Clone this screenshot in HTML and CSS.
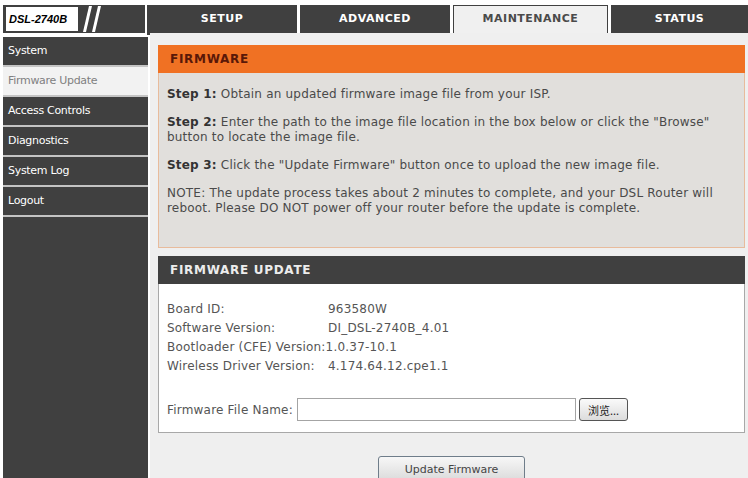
FILE: index.html
```html
<!DOCTYPE html>
<html lang="en">

<head>
    <meta charset="UTF-8">
    <meta name="viewport" content="width=device-width, initial-scale=1.0">
    <title>DSL-2740B</title>
    <link rel="stylesheet" href="styles.css">
</head>

<body>
    <div class="top-bar">
        <div class="brand">
            <span class="model">DSL-2740B</span>
            <svg class="slashes" width="20" height="26" viewBox="0 0 20 26">
                <polygon points="6,0 9,0 3,26 0,26" fill="#fff" />
                <polygon points="15,0 18,0 12,26 9,26" fill="#fff" />
            </svg>
        </div>
        <ul class="tabs">
            <li>SETUP</li>
            <li>ADVANCED</li>
            <li class="active">MAINTENANCE</li>
            <li>STATUS</li>
        </ul>
    </div>

    <div class="main">
        <ul class="side-nav">
            <li>System</li>
            <li class="current">Firmware Update</li>
            <li>Access Controls</li>
            <li>Diagnostics</li>
            <li>System Log</li>
            <li>Logout</li>
        </ul>

        <div class="content">
            <div class="panel">
                <h2 class="panel-head orange">FIRMWARE</h2>
                <div class="panel-body intro">
                    <p><b>Step 1:</b> Obtain an updated firmware image file from your ISP.</p>
                    <p><b>Step 2:</b> Enter the path to the image file location in the box below or click the "Browse" button to locate the image file.</p>
                    <p><b>Step 3:</b> Click the "Update Firmware" button once to upload the new image file.</p>
                    <p>NOTE: The update process takes about 2 minutes to complete, and your DSL Router will reboot. Please DO NOT power off your router before the update is complete.</p>
                </div>
            </div>

            <div class="panel">
                <h2 class="panel-head dark">FIRMWARE UPDATE</h2>
                <div class="panel-body info">
                    <div class="info-grid">
                        <span>Board ID:</span><span>963580W</span>
                        <span>Software Version:</span><span>DI_DSL-2740B_4.01</span>
                        <span class="wide">Bootloader (CFE) Version:1.0.37-10.1</span>
                        <span>Wireless Driver Version:</span><span>4.174.64.12.cpe1.1</span>
                    </div>
                    <div class="file-row">
                        <label for="fw-file">Firmware File Name:</label>
                        <input type="text" id="fw-file" class="file-path">
                        <button class="browse-btn">浏览...</button>
                    </div>
                </div>
            </div>

            <div class="actions">
                <button class="update-btn">Update Firmware</button>
            </div>
        </div>
    </div>
</body>

</html>
```

FILE: styles.css
```css
* {
    margin: 0;
    padding: 0;
    box-sizing: border-box;
}

li {
    list-style: none;
}

body {
    width: 748px;
    height: 478px;
    overflow: hidden;
    background-color: #fff;
    font-family: "DejaVu Sans", Verdana, sans-serif;
    font-size: 11px;
    color: #444;
}

/* header: model badge + main tabs */
.top-bar {
    display: flex;
    height: 33px;
    padding: 5px 0 0 3px;
}

.brand {
    width: 142px;
    display: flex;
    align-items: center;
    gap: 5px;
    padding-left: 3px;
    background-color: #404040;
}

.brand .model {
    width: 72px;
    height: 24px;
    padding-left: 3px;
    background-color: #fff;
    color: #000;
    font: italic bold 11px/24px "Liberation Sans", Arial, sans-serif;
}

.tabs {
    flex: 1;
    margin-left: 2px;
    display: grid;
    grid-template-columns: 150px 150px 155px 1fr;
    column-gap: 3px;
}

.tabs li {
    background-color: #404040;
    color: #fff;
    font-weight: bold;
    line-height: 28px;
    letter-spacing: 0.5px;
    text-align: center;
}

.tabs .active {
    background-color: #f0f0f0;
    color: #4a4a4a;
    border: 1px solid #404040;
    border-bottom: none;
    line-height: 26px;
    height: 30px;
}

/* body: left menu + content */
.main {
    display: flex;
    height: 445px;
}

.side-nav {
    width: 145px;
    margin: 4px 0 0 3px;
    background-color: #404040;
}

.side-nav li {
    height: 30px;
    padding-left: 5px;
    border-bottom: 2px solid #c4c4c4;
    color: #fff;
    line-height: 28px;
    letter-spacing: -0.3px;
}

.side-nav .current {
    background-color: #f2f2f2;
    color: #808080;
}

.content {
    flex: 1;
    margin-left: 2px;
    padding: 12px 3px 0 8px;
    background-color: #efefef;
    font-size: 12px;
    letter-spacing: 0.2px;
}

.panel + .panel {
    margin-top: 8px;
}

.panel-head {
    height: 28px;
    padding-left: 12px;
    font-size: 12px;
    line-height: 28px;
    letter-spacing: 0.7px;
}

.panel-head.orange {
    background-color: #f07123;
    color: #5a1808;
}

.panel-head.dark {
    background-color: #404040;
    color: #ececec;
}

.intro {
    padding: 14px 8px 31px;
    background-color: #e1dfdc;
    border: 1px solid #e8bb9c;
    border-top: none;
    color: #4a4a4a;
}

.intro p {
    line-height: 15px;
    margin-bottom: 13px;
}

.intro p:last-child {
    margin-bottom: 0;
}

.intro b {
    color: #333;
}

.info {
    padding: 15px 8px 11px;
    background-color: #fff;
    border: 1px solid #a8a8a8;
    border-top: none;
    color: #555;
}

.info-grid {
    display: grid;
    grid-template-columns: 161px 1fr;
    grid-auto-rows: 19px;
    align-items: center;
}

.info-grid .wide {
    grid-column: 1 / -1;
}

.file-row {
    display: flex;
    align-items: center;
    margin-top: 23px;
}

.file-row label {
    flex-shrink: 0;
    width: 130px;
}

.file-path {
    width: 279px;
    height: 23px;
    border: 1px solid #a4a4a4;
    background-color: #fff;
}

.browse-btn {
    width: 49px;
    height: 23px;
    margin-left: 3px;
    border: 1px solid #555;
    border-radius: 3px;
    background: linear-gradient(#fafafa, #dcdcdc);
    color: #222;
    font: 11px "Noto Sans CJK SC", sans-serif;
}

.actions {
    padding-top: 23px;
    text-align: center;
}

.update-btn {
    width: 147px;
    height: 26px;
    border: 1px solid #6f7d8a;
    border-radius: 3px;
    background: linear-gradient(#f7f7f7, #dadada);
    color: #444;
    font: 11px "DejaVu Sans", Verdana, sans-serif;
}
```
